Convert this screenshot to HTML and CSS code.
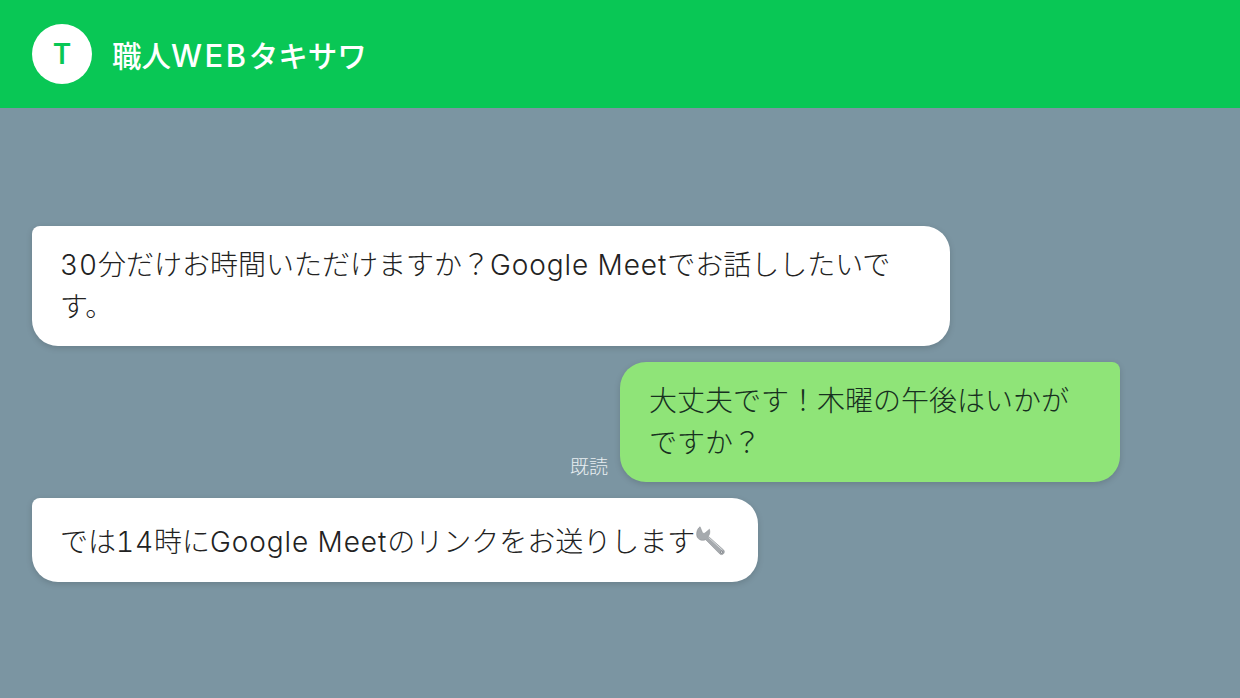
FILE: index.html
```html
<!DOCTYPE html>
<html lang="ja">
<head>
    <meta charset="utf-8">
    <title>職人WEBタキサワ</title>
    <link rel="stylesheet" href="styles.css">
</head>
<body>
    <div class="chat">
        <header class="chat-header">
            <div class="avatar">T</div>
            <div class="chat-title">職人<span class="en">WEB</span>タキサワ</div>
        </header>
        <main class="messages">
            <div class="row">
                <div class="bubble incoming wide"><span class="en">30</span>分だけお時間いただけますか？<span class="en">Google Meet</span>でお話ししたいです。</div>
            </div>
            <div class="row outgoing-row">
                <span class="read">既読</span>
                <div class="bubble outgoing">大丈夫です！木曜の午後はいかがですか？</div>
            </div>
            <div class="row">
                <div class="bubble incoming last"><span>では<span class="en">14</span>時に<span class="en">Google Meet</span>のリンクをお送りします</span><svg class="wrench" viewBox="0 0 32 32" aria-hidden="true">
                        <path d="M5.4 0.8 L7.8 6.6 Q8.6 8.4 10.4 7.6 L15.4 3.4 C16.2 6.4 15.8 9 14.2 11 L30.6 25.6 C31.8 27 31.4 28.8 30.2 29.8 C29 30.8 27.4 30.8 26.2 29.6 L11.4 14.6 C8.4 16 4.8 15.4 2.8 12.6 C0.8 9.6 1.6 3.4 5.4 0.8 Z" fill="#a6aaae" stroke="#808589" stroke-width="0.5"/>
                        <path d="M14.6 12.4 L29.4 25.8" fill="none" stroke="#dcdfe1" stroke-width="1"/>
                        <circle cx="28.4" cy="27.9" r="1.2" fill="#f2f3f4" stroke="#54585c" stroke-width="0.6"/>
                    </svg></div>
            </div>
        </main>
    </div>
</body>
</html>
```

FILE: styles.css
```css
* {
    box-sizing: border-box;
}
html, body {
    height: 100%;
}
body {
    margin: 0;
    font-family: Inter, "Noto Sans CJK JP", sans-serif;
    font-weight: 300;
    color: #222;
    background: #7b95a2;
}
.en {
    letter-spacing: 0.9px;
    font-feature-settings: "tnum";
}
.chat {
    height: 100%;
    display: flex;
    flex-direction: column;
}
.chat-header {
    height: 108px;
    flex: none;
    display: flex;
    align-items: center;
    gap: 20px;
    padding: 0 32px;
    background: #09c755;
}
.avatar {
    width: 60px;
    height: 60px;
    border-radius: 50%;
    background: #fff;
    color: #09c755;
    display: flex;
    align-items: center;
    justify-content: center;
    font-size: 28px;
    font-weight: 600;
}
.chat-title {
    color: #fff;
    font-size: 29.5px;
    font-weight: 500;
}
.chat-title .en {
    font-size: 31px;
    letter-spacing: 2.5px;
}
.messages {
    flex: 1;
    display: flex;
    flex-direction: column;
    justify-content: center;
    gap: 16px;
    padding: 2px 32px 0;
}
.row {
    display: flex;
}
.outgoing-row {
    justify-content: flex-end;
    align-items: flex-end;
    gap: 12px;
    padding-right: 88px;
}
.bubble {
    padding: 18px 28px;
    font-size: 28px;
    line-height: 42px;
    box-shadow: 0 2px 6px rgba(0,0,0,0.15);
}
.incoming {
    background: #fff;
    border-radius: 8px 26px 26px 26px;
}
.wide {
    width: 918px;
}
.last {
    display: flex;
    align-items: center;
    height: 84px;
    padding-top: 22px;
}
.outgoing {
    width: 500px;
    padding-left: 29px;
    color: #17301f;
    background: #8fe478;
    border-radius: 26px 8px 26px 26px;
}
.read {
    color: #e8eef1;
    font-size: 19px;
    line-height: 24px;
    margin-bottom: 2px;
}
.wrench {
    width: 30px;
    height: 30px;
    flex: none;
    margin: -2px 5px 0 0;
}
```
